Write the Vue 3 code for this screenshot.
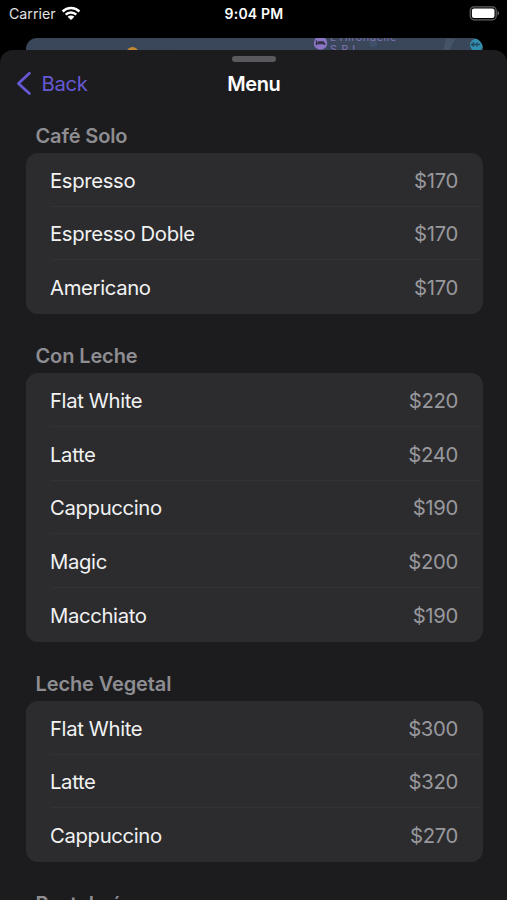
<script setup>
const sections = [
  { title: 'Café Solo', items: [['Espresso', 170], ['Espresso Doble', 170], ['Americano', 170]] },
  { title: 'Con Leche', items: [['Flat White', 220], ['Latte', 240], ['Cappuccino', 190], ['Magic', 200], ['Macchiato', 190]] },
  { title: 'Leche Vegetal', items: [['Flat White', 300], ['Latte', 320], ['Cappuccino', 270]] },
  { title: 'Pastelería', items: [] }
]
</script>

<template>
  <div class="screen">
    <header class="status">
      <div class="carrier">
        <span>Carrier</span>
        <svg class="wifi" width="20" height="15" viewBox="0 0 20 15">
          <path d="M1.600 5.500C6.300 .9 13.700 .9 18.400 5.500M4.700 8.700C7.700 5.800 12.300 5.800 15.300 8.700" fill="none" stroke="#fff" stroke-width="2.500" />
          <path d="M10 14.100L6.600 10.700C8.500 9 11.500 9 13.400 10.700Z" fill="#fff" />
        </svg>
      </div>
      <span class="time">9:04 PM</span>
      <svg class="battery" width="31" height="15" viewBox="0 0 31 15">
        <rect x="1.200" y=".8" width="26" height="13" rx="3.800" fill="none" stroke="#636366" stroke-width="1.200" />
        <rect x="2.900" y="2.500" width="22.600" height="9.600" rx="2.100" fill="#fff" />
        <path d="M28.500 5.100C30.700 5.800 30.700 8.800 28.500 9.500Z" fill="#636366" />
      </svg>
    </header>

    <div class="map">
      <svg class="streets" width="457" height="13" viewBox="0 0 457 13">
        <path d="M420 1H429L423 13H417Z" fill="#465468" />
        <circle cx="347" cy="5" r="4" fill="#3f5068" />
        <circle cx="106.500" cy="15" r="6" fill="#c18731" />
        <path d="M124 12h3M135 12h4M144 12h3" stroke="#354052" stroke-width="1" />
        <circle cx="294.500" cy="5" r="6.800" fill="#8a74c4" />
        <path d="M290.500 2.500V7M290.500 5.500H298.500V7M292 4H298" fill="none" stroke="#343047" stroke-width="1.500" />
        <circle cx="450.500" cy="7" r="6.500" fill="#308fae" />
        <path d="M446 6.500H454M448 4.500L445.500 6.500L448 8.500M451 4.500V8.500" fill="none" stroke="#254b61" stroke-width="1.500" />
      </svg>
      <div class="place">
        <span>L'Hirondelle</span>
        <span>S.R.L</span>
      </div>
    </div>

    <main class="sheet">
      <div class="grabber"></div>
      <nav class="nav">
        <a class="back">
          <svg width="16" height="25" viewBox="0 0 16 25"><path d="M13.400 2.200L2.400 12.400L13.400 22.600" fill="none" stroke="#6659d6" stroke-width="2.700" stroke-linecap="round" stroke-linejoin="round" /></svg>
          <span>Back</span>
        </a>
        <h1>Menu</h1>
      </nav>
      <section v-for="section in sections" :key="section.title" class="section">
        <h2>{{ section.title }}</h2>
        <ul v-if="section.items.length" class="card">
          <li v-for="[name, price] in section.items" :key="name">
            <span class="name">{{ name }}</span>
            <span class="price">${{ price }}</span>
          </li>
        </ul>
      </section>
    </main>
  </div>
</template>

<style>
body { margin: 0; background: #000; overflow: hidden; }
</style>

<style scoped>
* { box-sizing: border-box; }
.screen { width: 507px; height: 900px; overflow: hidden; display: flex; flex-direction: column; background: #000; font-family: Inter, "Liberation Sans", sans-serif; }
.status { height: 37.500px; flex: none; display: grid; grid-template-columns: 1fr auto 1fr; align-items: start; padding: 6px 7px 0 9px; color: #fff; font-size: 14.200px; line-height: 16px; }
.carrier { display: flex; gap: 5px; color: #e2e2e2; }
.wifi { display: block; margin-top: -.500px; }
.time { font-weight: 600; font-size: 14px; letter-spacing: .2px; margin-left: -1px; }
.battery { justify-self: end; display: block; }
.map { position: relative; flex: none; width: 457px; height: 12.500px; margin-left: 25.500px; border-radius: 11px 11px 0 0; overflow: hidden; background: #3a475a; }
.streets { display: block; }
.place { position: absolute; left: 304.500px; top: -5.400px; display: flex; flex-direction: column; font-size: 10.800px; line-height: 11.500px; letter-spacing: .55px; color: #7e70b0; }
.sheet { flex: 1; min-height: 0; overflow: hidden; display: flex; flex-direction: column; background: #1c1c1e; border-radius: 13px 13px 0 0; }
.grabber { flex: none; width: 44px; height: 6px; margin: 6px auto 0; border-radius: 3px; background: #5a5a5e; }
.nav { flex: none; height: 44px; display: grid; grid-template-columns: 1fr auto 1fr; align-items: center; padding: 0 15px 0 15.500px; }
.back { display: flex; align-items: center; gap: 10px; margin-top: -1px; color: #6659d6; font-size: 20.300px; letter-spacing: -.3px; }
.back svg { display: block; }
h1 { margin: 0; color: #fff; font-size: 20px; font-weight: 600; letter-spacing: -.4px; }
.section { flex: none; padding: 0 24.500px 0 25.500px; margin-bottom: 25.300px; }
h2 { margin: 0; height: 34px; padding: 5px 0 0 10px; color: #8d8d92; font-size: 20px; line-height: 24px; font-weight: 600; letter-spacing: -.12px; }
.section:nth-of-type(1) { padding-top: 13px; }
.card { margin: 0; padding: 0; list-style: none; border-radius: 12px; background: #2c2c2e; }
li { position: relative; height: 53.700px; display: flex; align-items: center; justify-content: space-between; padding: 1.400px 24.500px 0 24.500px; font-size: 20.300px; line-height: 26px; }
li:not(:last-child)::after { content: ""; position: absolute; left: 25px; right: 2px; bottom: 0; height: 1px; background: #333336; }
.name { color: #f2f2f3; letter-spacing: -.35px; }
.price { color: #98989d; letter-spacing: -.32px; }
</style>
